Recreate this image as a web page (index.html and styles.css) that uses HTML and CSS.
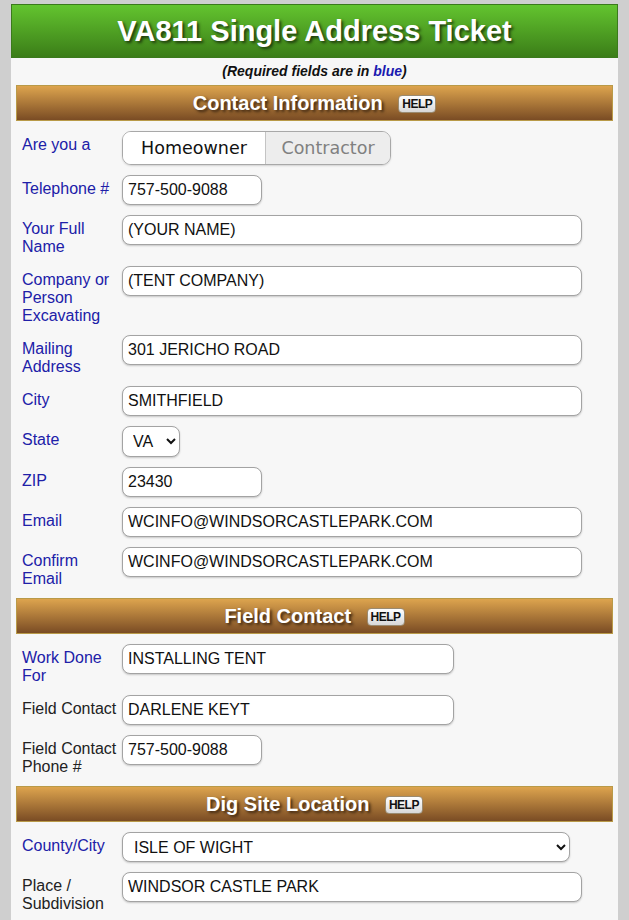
FILE: index.html
```html
<!DOCTYPE html>
<html lang="en">
<head>
    <meta charset="UTF-8">
    <meta name="viewport" content="width=device-width, initial-scale=1.0">
    <title>VA811 Single Address Ticket</title>
    <link rel="stylesheet" href="styles.css">
</head>
<body>
    <div class="page">
        <h1 class="banner">VA811 Single Address Ticket</h1>
        <p class="note">(Required fields are in <span>blue</span>)</p>
        <form name="ticketForm">
            <div class="section-head">Contact Information <span class="help">HELP</span></div>
            <div class="row">
                <label class="req">Are you a</label>
                <div class="toggle">
                    <span class="opt on">Homeowner</span>
                    <span class="opt">Contractor</span>
                </div>
            </div>
            <div class="row">
                <label class="req">Telephone #</label>
                <input type="text" class="short" value="757-500-9088">
            </div>
            <div class="row">
                <label class="req">Your Full Name</label>
                <input type="text" class="full" value="(YOUR NAME)">
            </div>
            <div class="row">
                <label class="req">Company or Person Excavating</label>
                <input type="text" class="full" value="(TENT COMPANY)">
            </div>
            <div class="row">
                <label class="req">Mailing Address</label>
                <input type="text" class="full" value="301 JERICHO ROAD">
            </div>
            <div class="row">
                <label class="req">City</label>
                <input type="text" class="full" value="SMITHFIELD">
            </div>
            <div class="row">
                <label class="req">State</label>
                <select class="state"><option>VA</option></select>
            </div>
            <div class="row">
                <label class="req">ZIP</label>
                <input type="text" class="short" value="23430">
            </div>
            <div class="row">
                <label class="req">Email</label>
                <input type="text" class="full" value="WCINFO@WINDSORCASTLEPARK.COM">
            </div>
            <div class="row">
                <label class="req">Confirm Email</label>
                <input type="text" class="full" value="WCINFO@WINDSORCASTLEPARK.COM">
            </div>

            <div class="section-head">Field Contact <span class="help">HELP</span></div>
            <div class="row">
                <label class="req">Work Done For</label>
                <input type="text" class="mid" value="INSTALLING TENT">
            </div>
            <div class="row">
                <label>Field Contact</label>
                <input type="text" class="mid" value="DARLENE KEYT">
            </div>
            <div class="row">
                <label>Field Contact Phone #</label>
                <input type="text" class="short" value="757-500-9088">
            </div>

            <div class="section-head">Dig Site Location <span class="help">HELP</span></div>
            <div class="row">
                <label class="req">County/City</label>
                <select class="county"><option>ISLE OF WIGHT</option></select>
            </div>
            <div class="row">
                <label>Place / Subdivision</label>
                <input type="text" class="full" value="WINDSOR CASTLE PARK">
            </div>
        </form>
    </div>
</body>
</html>
```

FILE: styles.css
```css
body { margin: 0; background: #cfcfcf; font-family: "Liberation Sans", Arial, sans-serif; font-size: 16px; color: #222; }
.page { width: 607px; margin: 4px auto 0; background: #f7f7f7; padding-bottom: 20px; }
.banner { margin: 0; height: 54px; box-sizing: border-box; border: 1px solid #3b7a1c; background: linear-gradient(#63c42f, #3b7d18); color: #fff; font-size: 29px; font-weight: bold; text-align: center; line-height: 52px; text-shadow: 2px 2px 3px #1d3a0c; }
.note { margin: 0; height: 27px; line-height: 27px; text-align: center; font-size: 14px; font-weight: bold; font-style: italic; color: #111; }
.note span { color: #1a1ab0; }
form { padding: 0 5px; }
.section-head { height: 36px; box-sizing: border-box; border: 1px solid #b99a48; background: linear-gradient(#dda44e, #7a4c24); color: #fff; font-size: 20px; font-weight: bold; text-align: center; line-height: 34px; text-shadow: 2px 2px 3px #3a2410; margin-bottom: 10px; }
.help { display: inline-block; vertical-align: 2px; margin-left: 10px; height: 18px; line-height: 17px; padding: 0 3px; border-radius: 4px; background: linear-gradient(#fff, #d8d8d8); color: #111; font-size: 12px; letter-spacing: -0.5px; text-shadow: none; border: 1px solid #9a8a70; box-sizing: border-box; }
.row { display: flex; align-items: flex-start; margin-bottom: 10px; }
.row label { width: 100px; flex: none; padding: 5px 0 0 6px; line-height: 18px; color: #222; }
.row label.req { color: #2020a8; }
input, select { height: 30px; box-sizing: border-box; border: 1px solid #a3a3a3; border-radius: 8px; background: #fff; font-family: "Liberation Sans", Arial, sans-serif; font-size: 16px; color: #111; padding: 0 5px; box-shadow: 0 1px 2px rgba(0,0,0,0.2); margin: 0; }
input.short { width: 140px; }
input.mid { width: 332px; }
input.full { width: 460px; }
select.state { width: 58px; height: 31px; padding-left: 6px; }
select.county { width: 448px; padding-left: 7px; }
.toggle { display: flex; height: 34px; box-sizing: border-box; border: 1px solid #a8a8a8; border-radius: 9px; overflow: hidden; box-shadow: 0 1px 2px rgba(0,0,0,0.15); font-family: "DejaVu Sans", Verdana, sans-serif; font-size: 17.5px; }
.opt { display: flex; align-items: center; justify-content: center; background: #ededed; color: #808080; width: 124px; }
.opt.on { background: #fff; color: #111; width: 142px; border-right: 1px solid #c4c4c4; }
```
